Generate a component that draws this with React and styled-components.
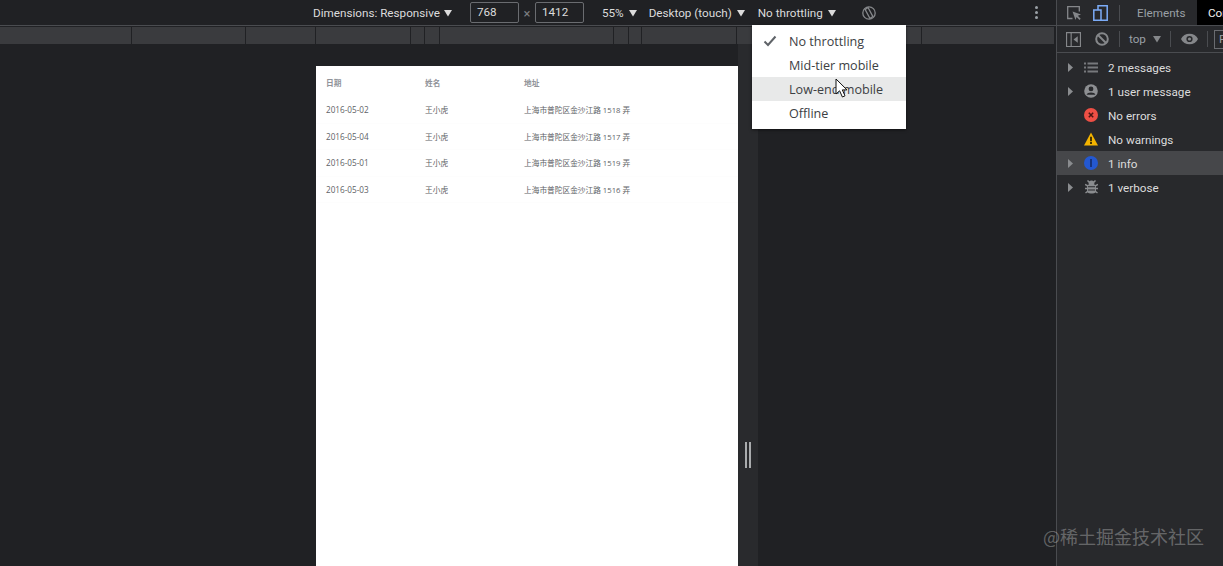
import React from "react";
import styled, { createGlobalStyle } from "styled-components";

const GlobalStyle = createGlobalStyle`
  html, body {
    margin: 0;
    padding: 0;
    background: #202124;
  }
`;

const uiFont = `Roboto, "Open Sans", "Liberation Sans", sans-serif`;

const rulerStops = [132, 114, 70, 95, 14, 15, 174, 15, 13, 95, 185, 133];

const rows = [
  { date: "2016-05-02", name: "王小虎", address: "上海市普陀区金沙江路 1518 弄" },
  { date: "2016-05-04", name: "王小虎", address: "上海市普陀区金沙江路 1517 弄" },
  { date: "2016-05-01", name: "王小虎", address: "上海市普陀区金沙江路 1519 弄" },
  { date: "2016-05-03", name: "王小虎", address: "上海市普陀区金沙江路 1516 弄" },
];

const throttling = [
  { label: "No throttling", checked: true },
  { label: "Mid-tier mobile" },
  { label: "Low-end mobile", hover: true },
  { label: "Offline" },
];

function Caret() {
  return (
    <svg width="8" height="8" viewBox="0 0 8 8">
      <path d="M0 1h8L4 7.5z" fill="#dcdcdc" />
    </svg>
  );
}

function Arrow() {
  return (
    <svg width="7" height="9" viewBox="0 0 7 9">
      <path d="M1 0l5 4.5L1 9z" fill="#8a8c8f" />
    </svg>
  );
}

const levels = [
  {
    label: "2 messages",
    arrow: true,
    icon: (
      <svg width="14" height="11" viewBox="0 0 14 11" fill="#77797c">
        <path d="M0 .5h2v2H0zM3.500 .5H14v2H3.500zM0 4.500h2v2H0zM3.500 4.500H14v2H3.500zM0 8.500h2v2H0zM3.500 8.500H14v2H3.500z" />
      </svg>
    ),
  },
  {
    label: "1 user message",
    arrow: true,
    icon: (
      <svg width="14" height="14" viewBox="0 0 14 14">
        <circle cx="7" cy="7" r="6.800" fill="#8d8f92" />
        <circle cx="7" cy="4.900" r="2.400" fill="#28292c" />
        <path d="M2.600 10.800c.6-3 8.200-3 8.800 0z" fill="#28292c" />
      </svg>
    ),
  },
  {
    label: "No errors",
    icon: (
      <svg width="14" height="14" viewBox="0 0 14 14">
        <circle cx="7" cy="7" r="7" fill="#ee4f45" />
        <path d="M4.800 4.800l4.400 4.400M9.200 4.800L4.800 9.200" stroke="#4a1512" strokeWidth="1.500" />
      </svg>
    ),
  },
  {
    label: "No warnings",
    icon: (
      <svg width="15" height="14" viewBox="0 0 15 14">
        <path d="M7.500 0L15 14H0z" fill="#f4b400" />
        <path d="M6.500 4.500h2v5h-2zM6.500 10.300h2v2h-2z" fill="#3a2c00" />
      </svg>
    ),
  },
  {
    label: "1 info",
    arrow: true,
    active: true,
    icon: (
      <svg width="14" height="14" viewBox="0 0 14 14">
        <circle cx="7" cy="7" r="7" fill="#2458d0" />
        <path d="M6 3h2v8H6z" fill="#16337c" />
      </svg>
    ),
  },
  {
    label: "1 verbose",
    arrow: true,
    icon: (
      <svg width="13" height="14" viewBox="0 0 13 14">
        <rect x="2" y="4" width="9" height="9.500" rx="3.500" fill="#8a8c8f" />
        <circle cx="6.500" cy="3.200" r="2.800" fill="#8a8c8f" />
        <path d="M2.500 .5l2 2M10.500 .5l-2 2M0 4.500l3 1.500M13 4.500l-3 1.500M0 8.500h3M13 8.500h-3M.5 13l2.500-1.800M12.500 13L10 11.200" stroke="#8a8c8f" strokeWidth="1.500" />
        <path d="M3 6.300h7v1H3zM3 9.500h7v1H3z" fill="#28292c" />
      </svg>
    ),
  },
];

export default function App() {
  return (
    <>
      <GlobalStyle />
      <Frame>
        <Main>
          <Toolbar>
            <ToolText>Dimensions: Responsive</ToolText>
            <CaretBox $gap={4}>
              <Caret />
            </CaretBox>
            <SizeInput $left={18}>768</SizeInput>
            <Times>×</Times>
            <SizeInput>1412</SizeInput>
            <ToolText $left={18}>55%</ToolText>
            <CaretBox $gap={5}>
              <Caret />
            </CaretBox>
            <ToolText $left={12}>Desktop (touch)</ToolText>
            <CaretBox $gap={5}>
              <Caret />
            </CaretBox>
            <ToolText $left={13}>No throttling</ToolText>
            <CaretBox $gap={5}>
              <Caret />
            </CaretBox>
            <RotateIcon viewBox="0 0 14 14" width="14" height="14">
              <circle cx="7" cy="7" r="6.200" fill="none" stroke="#85878a" strokeWidth="1.300" />
              <path d="M3.200 3.600L6 1.400l4.800 9-2.800 2.200z" fill="none" stroke="#85878a" strokeWidth="1.300" />
            </RotateIcon>
            <MoreDots>
              <i />
              <i />
              <i />
            </MoreDots>
          </Toolbar>
          <Ruler>
            {rulerStops.map((width, i) => (
              <RulerStop key={i} $width={width} />
            ))}
          </Ruler>
          <Canvas>
            <Page>
              <Table>
                <thead>
                  <tr>
                    <HeadCell $width={99}>日期</HeadCell>
                    <HeadCell $width={99}>姓名</HeadCell>
                    <HeadCell>地址</HeadCell>
                  </tr>
                </thead>
                <tbody>
                  {rows.map((row) => (
                    <tr key={row.date}>
                      <DateCell>{row.date}</DateCell>
                      <Cell>{row.name}</Cell>
                      <Cell>{row.address}</Cell>
                    </tr>
                  ))}
                </tbody>
              </Table>
            </Page>
            <ResizeHandle>
              <i />
              <i />
            </ResizeHandle>
          </Canvas>
        </Main>

        <DevTools>
          <TabBar>
            <TabIcon viewBox="0 0 14 14" width="14" height="14">
              <path d="M5.500 12.500H.700V.700h11.600v4.800" fill="none" stroke="#85878a" strokeWidth="1.300" />
              <path d="M5.500 5.500l8.500 3-3.200 1.300 2.900 2.900-1.200 1.200-2.900-2.900L8.500 14z" fill="#85878a" />
            </TabIcon>
            <TabIcon $left={12} viewBox="0 0 15 16" width="15" height="16">
              <path d="M5 5V.800h9.200v14.400H5M.800 5H8v10.200H.800z" fill="none" stroke="#7cacf8" strokeWidth="1.500" />
            </TabIcon>
            <Sep $left={11} />
            <TabLabel>Elements</TabLabel>
            <ActiveTab>Console</ActiveTab>
          </TabBar>
          <FilterBar>
            <TabIcon viewBox="0 0 16 16" width="15" height="15">
              <path d="M.600.600h14.800v14.800H.600zM5.500 1v14" fill="none" stroke="#85878a" strokeWidth="1.200" />
              <path d="M12.500 4.500v7L8 8z" fill="#85878a" />
            </TabIcon>
            <TabIcon $left={14} viewBox="0 0 14 14" width="14" height="14">
              <circle cx="7" cy="7" r="5.800" fill="none" stroke="#85878a" strokeWidth="2" />
              <path d="M3 3l8 8" stroke="#85878a" strokeWidth="2" />
            </TabIcon>
            <Sep $left={10} />
            <ContextLabel>top</ContextLabel>
            <CaretBox $gap={7}>
              <svg width="8" height="8" viewBox="0 0 8 8">
                <path d="M0 1h8L4 7.500z" fill="#85878a" />
              </svg>
            </CaretBox>
            <Sep $left={9} />
            <TabIcon $left={10} viewBox="0 0 18 12" width="17" height="12">
              <path d="M0 6c3-7.500 15-7.500 18 0-3 7.500-15 7.500-18 0z" fill="#85878a" />
              <circle cx="9" cy="6" r="3.300" fill="#28292c" />
              <circle cx="9" cy="6" r="1.700" fill="#85878a" />
            </TabIcon>
            <Sep $left={9} />
            <FilterBox>F</FilterBox>
          </FilterBar>
          <LevelList>
            {levels.map((level) => (
              <LevelRow key={level.label} $active={level.active}>
                <ArrowSlot>{level.arrow && <Arrow />}</ArrowSlot>
                <IconSlot>{level.icon}</IconSlot>
                <LevelLabel>{level.label}</LevelLabel>
              </LevelRow>
            ))}
          </LevelList>
        </DevTools>

        <Menu>
          {throttling.map((item) => (
            <MenuItem key={item.label} $hover={item.hover}>
              <CheckSlot>
                {item.checked && (
                  <svg width="14" height="12" viewBox="0 0 14 12">
                    <path d="M1.500 6.500l3.500 3.500 7.500-8.500" fill="none" stroke="#5f6368" strokeWidth="2" />
                  </svg>
                )}
              </CheckSlot>
              {item.label}
            </MenuItem>
          ))}
        </Menu>

        <Pointer viewBox="0 0 13 20" width="13" height="20">
          <path d="M1 1v15l3.600-3.200L7.400 19l2.600-1.200-2.700-5.900H12z" fill="#fff" stroke="#111" strokeWidth="1" />
        </Pointer>

        <Watermark>@稀土掘金技术社区</Watermark>
      </Frame>
    </>
  );
}

const Frame = styled.div`
  position: relative;
  display: flex;
  width: 1223px;
  height: 566px;
  overflow: hidden;
  background: #202124;
  font-family: ${uiFont};
  font-size: 11.700px;
`;

const Main = styled.div`
  display: flex;
  flex-direction: column;
  width: 1056px;
  flex-shrink: 0;
`;

const Toolbar = styled.div`
  display: flex;
  align-items: center;
  height: 25px;
  padding: 0 18px 0 313px;
  border-bottom: 1px solid #4a4c50;
  color: #dcdcdc;
`;

const ToolText = styled.span`
  margin-left: ${({ $left }) => $left || 0}px;
  white-space: nowrap;
`;

const CaretBox = styled.span`
  display: inline-flex;
  margin-left: ${({ $gap }) => $gap}px;
`;

const SizeInput = styled.div`
  box-sizing: border-box;
  width: 49px;
  height: 21px;
  margin-left: ${({ $left }) => $left || 0}px;
  padding-left: 6px;
  border: 1px solid #6a6c70;
  border-radius: 2px;
  line-height: 19px;
  color: #dcdcdc;
`;

const Times = styled.span`
  width: 16px;
  padding-top: 2px;
  text-align: center;
  font-size: 13px;
  color: #7c7e81;
`;

const RotateIcon = styled.svg`
  margin-left: 26px;
`;

const MoreDots = styled.div`
  display: flex;
  flex-direction: column;
  gap: 2px;
  margin-left: auto;

  i {
    width: 3px;
    height: 3px;
    border-radius: 50%;
    background: #9aa0a6;
  }
`;

const Ruler = styled.div`
  display: flex;
  height: 17px;
  margin-top: 1px;
`;

const RulerStop = styled.div`
  box-sizing: border-box;
  width: ${({ $width }) => $width}px;
  background: #3a3b3e;
  border-right: 1px solid #202124;
`;

const Canvas = styled.div`
  display: flex;
  flex: 1;
  padding-left: 316px;
`;

const Page = styled.div`
  box-sizing: border-box;
  width: 422px;
  margin-top: 22px;
  background: #fff;
`;

const Table = styled.table`
  width: 100%;
  border-collapse: collapse;
  table-layout: fixed;
  font-family: "Open Sans", "Noto Sans CJK SC", sans-serif;
  font-size: 7.700px;
  color: #606266;
`;

const HeadCell = styled.th`
  width: ${({ $width }) => ($width ? `${$width}px` : "auto")};
  height: 31px;
  padding: 2px 0 0 10px;
  box-sizing: border-box;
  text-align: left;
  font-weight: 700;
  color: #909399;
`;

const Cell = styled.td`
  height: 26.400px;
  padding: 0 0 0 10px;
  box-sizing: border-box;
  white-space: nowrap;
  border-bottom: 1px solid #fdfdfd;
`;

const DateCell = styled(Cell)`
  font-size: 8.200px;
`;

const ResizeHandle = styled.div`
  display: flex;
  align-items: flex-start;
  justify-content: center;
  gap: 2px;
  width: 20px;
  padding-top: 398px;
  background: #292a2d;

  i {
    width: 2px;
    height: 26px;
    background: #a9abad;
  }
`;

const DevTools = styled.div`
  flex: 1;
  display: flex;
  flex-direction: column;
  min-width: 0;
  border-left: 1px solid #4a4c50;
  background: #28292c;
  color: #dcdcdc;
`;

const TabBar = styled.div`
  display: flex;
  align-items: center;
  height: 25px;
  padding-left: 10px;
  border-bottom: 1px solid #4a4c50;
`;

const TabIcon = styled.svg`
  flex-shrink: 0;
  margin-left: ${({ $left }) => $left || 0}px;
`;

const Sep = styled.span`
  flex-shrink: 0;
  width: 1px;
  height: 16px;
  margin-left: ${({ $left }) => $left || 0}px;
  background: #4a4c50;
`;

const TabLabel = styled.span`
  flex: 1;
  margin-left: 17px;
  color: #9aa0a6;
`;

const ActiveTab = styled.span`
  align-self: stretch;
  display: flex;
  align-items: center;
  flex: 0 0 26px;
  box-sizing: border-box;
  padding-left: 11px;
  overflow: hidden;
  background: #000;
  color: #f1f1f1;
`;

const FilterBar = styled.div`
  display: flex;
  align-items: center;
  height: 26px;
  padding-left: 9px;
  border-bottom: 1px solid #4a4c50;
  overflow: hidden;
`;

const ContextLabel = styled.span`
  margin-left: 9px;
  color: #9aa0a6;
`;

const FilterBox = styled.div`
  flex-shrink: 0;
  width: 30px;
  height: 19px;
  margin-left: 6px;
  padding-left: 4px;
  box-sizing: border-box;
  border: 1px solid #6a6c70;
  color: #9aa0a6;
  line-height: 17px;
`;

const LevelList = styled.div`
  padding-top: 2px;
`;

const LevelRow = styled.div`
  display: flex;
  align-items: center;
  height: 24px;
  background: ${({ $active }) => ($active ? "#46474a" : "transparent")};
`;

const ArrowSlot = styled.span`
  display: flex;
  justify-content: center;
  width: 27px;
`;

const IconSlot = styled.span`
  display: flex;
  justify-content: center;
  width: 14px;
`;

const LevelLabel = styled.span`
  margin-left: 10px;
  padding-top: 1px;
`;

const Menu = styled.div`
  position: absolute;
  left: 752px;
  top: 25px;
  box-sizing: border-box;
  width: 154px;
  height: 104px;
  padding-top: 4px;
  background: #fff;
  box-shadow: 0 1px 3px rgba(0, 0, 0, 0.5);
  font-family: "Open Sans", sans-serif;
  font-size: 12.600px;
  color: #3c4043;
`;

const MenuItem = styled.div`
  display: flex;
  align-items: center;
  height: 24px;
  background: ${({ $hover }) => ($hover ? "#e8e9e9" : "transparent")};
`;

const CheckSlot = styled.span`
  display: flex;
  justify-content: center;
  width: 37px;
  padding-right: 2px;
  box-sizing: border-box;
`;

const Pointer = styled.svg`
  position: absolute;
  left: 835px;
  top: 78px;
`;

const Watermark = styled.div`
  position: absolute;
  left: 1043px;
  top: 524px;
  font-family: "Noto Sans CJK SC", sans-serif;
  font-size: 18px;
  line-height: 24px;
  color: rgba(255, 255, 255, 0.3);
  white-space: nowrap;
`;
